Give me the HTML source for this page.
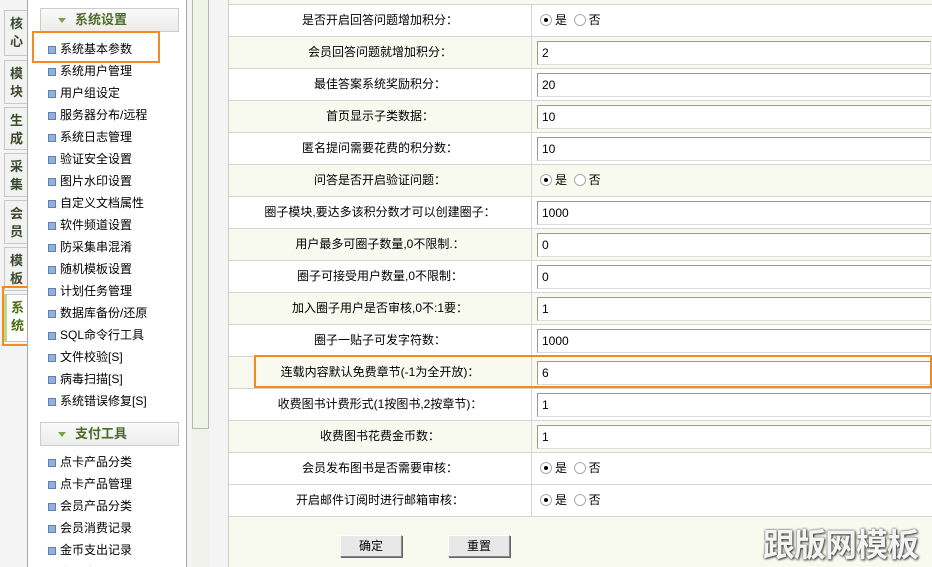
<!DOCTYPE html>
<html style="width:932px;height:567px;overflow:hidden"><head><meta charset="utf-8"><style>
*{margin:0;padding:0;box-sizing:border-box}
html,body{width:932px;height:567px;overflow:hidden}
body{background:#f4f4f4;font:12px "Liberation Sans","Noto Sans CJK SC",sans-serif;color:#000;position:relative}
.tab{position:absolute;left:4px;width:24px;background:#f2f2f2;border:1px solid #c8c8c8;border-right:none;color:#3b4a2c;font-weight:bold;font-size:13px;text-align:center;line-height:18px;padding-top:4px}
.side{position:absolute;left:27px;top:-2px;width:160px;height:569px;background:#fff;border:1px solid #a8a8a0;border-bottom:none;overflow:hidden}
.hd{position:absolute;left:12px;width:139px;height:24px;border:1px solid #ccc;background:linear-gradient(#fafafa,#ececec);color:#4a6b2a;font-weight:bold;font-size:13px;line-height:22px;padding-left:34px}
.hd:before{content:"";position:absolute;left:17px;top:9px;border:4px solid transparent;border-top:5px solid #7aa04a}
.it{position:absolute;left:20px;height:22px;line-height:22px;padding-left:12px}
.it:before{content:"";position:absolute;left:0;top:8px;width:6px;height:6px;background:#8fb0e0;border:1px solid #6080b0}
.scr{position:absolute;left:192px;top:0;width:17px;height:429px;background:#eef5e6;border:1px solid #b8b8b0;border-top:none}
.trk{position:absolute;left:192px;top:429px;width:17px;height:138px;background:#f0f2ea}
.main{position:absolute;left:228px;top:0;width:704px;height:567px;background:#f8faef;border-left:1px solid #ccc}
.row{position:absolute;left:0;width:704px;height:32px;border-top:1px solid #d4d4d4}
.row.w{background:#fff}
.lb{position:absolute;left:0;width:302px;text-align:center;line-height:31px}
.vl{position:absolute;left:302px;top:0;height:31px;border-left:1px solid #d4d4d4;width:402px}
.in{position:absolute;left:5px;top:4px;width:394px;height:24px;background:#fff;border:1px solid #999;border-right-color:#ddd;border-bottom-color:#ddd;padding-left:4px;line-height:22px}
.rd{position:absolute;left:8px;top:9px;line-height:13px}
.rd i{display:inline-block;width:12px;height:12px;border:1px solid #aaa;border-radius:50%;vertical-align:-2px;margin-right:3px;position:relative;background:#fff}
.rd i.on:after{content:"";position:absolute;left:3px;top:3px;width:4px;height:4px;border-radius:50%;background:#000}
.btn{position:absolute;top:535px;width:62px;height:22px;border:1px solid #888;border-top-color:#fff;border-left-color:#fff;background:#e8e8e8;text-align:center;line-height:20px;box-shadow:1px 1px 0 #666}
.ob{position:absolute;border:2px solid #f58a1e}
.wm{position:absolute;left:763px;top:525px;font-size:32px;font-weight:bold;color:#f4f4f4;text-shadow:0 0 2px #444,1px 1px 2px #333;letter-spacing:-1px;line-height:40px}
</style></head><body>
<div class="tab" style="top:10px;height:46px">核<br>心</div>
<div class="tab" style="top:60px;height:44px">模<br>块</div>
<div class="tab" style="top:107px;height:43px">生<br>成</div>
<div class="tab" style="top:153px;height:44px">采<br>集</div>
<div class="tab" style="top:200px;height:44px">会<br>员</div>
<div class="tab" style="top:247px;height:44px">模<br>板</div>
<div class="tab" style="top:294px;height:48px;background:#fff;color:#4a6b10;border-left:3px solid #b8d890">系<br>统</div>
<div class="ob" style="left:2px;top:286px;width:29px;height:60px"></div>
<div class="side">
<div class="hd" style="top:9px">系统设置</div>
<div class="it" style="top:39px">系统基本参数</div>
<div class="it" style="top:61px">系统用户管理</div>
<div class="it" style="top:83px">用户组设定</div>
<div class="it" style="top:105px">服务器分布/远程</div>
<div class="it" style="top:127px">系统日志管理</div>
<div class="it" style="top:149px">验证安全设置</div>
<div class="it" style="top:171px">图片水印设置</div>
<div class="it" style="top:193px">自定义文档属性</div>
<div class="it" style="top:215px">软件频道设置</div>
<div class="it" style="top:237px">防采集串混淆</div>
<div class="it" style="top:259px">随机模板设置</div>
<div class="it" style="top:281px">计划任务管理</div>
<div class="it" style="top:303px">数据库备份/还原</div>
<div class="it" style="top:325px">SQL命令行工具</div>
<div class="it" style="top:347px">文件校验[S]</div>
<div class="it" style="top:369px">病毒扫描[S]</div>
<div class="it" style="top:391px">系统错误修复[S]</div>
<div class="hd" style="top:423px">支付工具</div>
<div class="it" style="top:452px">点卡产品分类</div>
<div class="it" style="top:474px">点卡产品管理</div>
<div class="it" style="top:496px">会员产品分类</div>
<div class="it" style="top:518px">会员消费记录</div>
<div class="it" style="top:540px">金币支出记录</div>
<div class="it" style="top:563px">会员产品</div>
</div>
<div class="ob" style="left:32px;top:31px;width:128px;height:32px"></div>
<div class="scr"></div><div class="trk"></div>
<div class="main">
<div class="row w" style="top:4px"><div class="lb">是否开启回答问题增加积分：</div><div class="vl"><div class="rd"><i class="on"></i>是 &nbsp;<i></i>否</div></div></div>
<div class="row" style="top:36px"><div class="lb">会员回答问题就增加积分：</div><div class="vl"><div class="in">2</div></div></div>
<div class="row w" style="top:68px"><div class="lb">最佳答案系统奖励积分：</div><div class="vl"><div class="in">20</div></div></div>
<div class="row" style="top:100px"><div class="lb">首页显示子类数据：</div><div class="vl"><div class="in">10</div></div></div>
<div class="row w" style="top:132px"><div class="lb">匿名提问需要花费的积分数：</div><div class="vl"><div class="in">10</div></div></div>
<div class="row" style="top:164px"><div class="lb">问答是否开启验证问题：</div><div class="vl"><div class="rd"><i class="on"></i>是 &nbsp;<i></i>否</div></div></div>
<div class="row w" style="top:196px"><div class="lb">圈子模块,要达多该积分数才可以创建圈子：</div><div class="vl"><div class="in">1000</div></div></div>
<div class="row" style="top:228px"><div class="lb">用户最多可圈子数量,0不限制.：</div><div class="vl"><div class="in">0</div></div></div>
<div class="row w" style="top:260px"><div class="lb">圈子可接受用户数量,0不限制：</div><div class="vl"><div class="in">0</div></div></div>
<div class="row" style="top:292px"><div class="lb">加入圈子用户是否审核,0不:1要：</div><div class="vl"><div class="in">1</div></div></div>
<div class="row w" style="top:324px"><div class="lb">圈子一贴子可发字符数：</div><div class="vl"><div class="in">1000</div></div></div>
<div class="row" style="top:356px"><div class="lb">连载内容默认免费章节(-1为全开放)：</div><div class="vl"><div class="in">6</div></div></div>
<div class="row w" style="top:388px"><div class="lb">收费图书计费形式(1按图书,2按章节)：</div><div class="vl"><div class="in">1</div></div></div>
<div class="row" style="top:420px"><div class="lb">收费图书花费金币数：</div><div class="vl"><div class="in">1</div></div></div>
<div class="row w" style="top:452px"><div class="lb">会员发布图书是否需要审核：</div><div class="vl"><div class="rd"><i class="on"></i>是 &nbsp;<i></i>否</div></div></div>
<div class="row w" style="top:484px;border-bottom:1px solid #d4d4d4;height:33px"><div class="lb">开启邮件订阅时进行邮箱审核：</div><div class="vl"><div class="rd"><i class="on"></i>是 &nbsp;<i></i>否</div></div></div>
</div>
<div class="ob" style="left:254px;top:355px;width:678px;height:33px"></div>
<div class="btn" style="left:340px">确定</div>
<div class="btn" style="left:448px">重置</div>
<div class="wm">跟版网模板</div>
</body></html>
